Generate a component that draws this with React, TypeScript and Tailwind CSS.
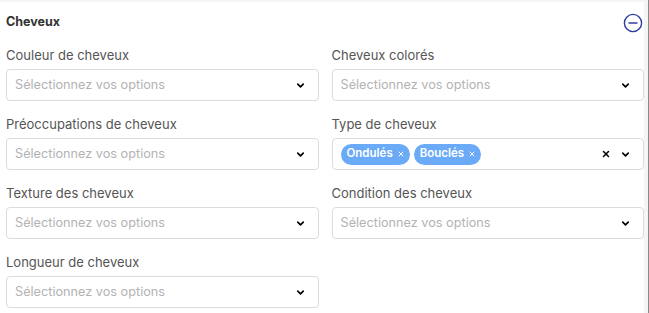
import { ChevronDown, X } from 'lucide-react'

type Field = { label: string; tags?: string[] }

const FIELDS: Field[] = [
  { label: 'Couleur de cheveux' },
  { label: 'Cheveux colorés' },
  { label: 'Préoccupations de cheveux' },
  { label: 'Type de cheveux', tags: ['Ondulés', 'Bouclés'] },
  { label: 'Texture des cheveux' },
  { label: 'Condition des cheveux' },
  { label: 'Longueur de cheveux' },
]

function Select({ field }: { field: Field }) {
  return (
    <div>
      <p className="text-[13px] text-[#555] leading-4 mb-[6px]">{field.label}</p>
      <div className="h-[32px] border border-[#dcdcdc] rounded-[4px] bg-white flex items-center pl-[7px] pr-[12px]">
        {field.tags ? (
          <div className="flex-1 flex gap-[4px] pl-[1px]">
            {field.tags.map(t => (
              <span key={t} className="h-[21px] rounded-full bg-[#6aaaf6] text-white text-[11.5px] font-semibold flex items-center pl-[6px] pr-[5px] gap-[4px]">
                {t}
                <X size={8} strokeWidth={3} />
              </span>
            ))}
          </div>
        ) : (
          <span className="flex-1 text-[12.7px] text-[#b3b3b3] pl-[1px]">Sélectionnez vos options</span>
        )}
        {field.tags && <X size={10} strokeWidth={3.5} className="text-black mr-[9px]" />}
        <ChevronDown size={11} strokeWidth={3.5} className="text-black" />
      </div>
    </div>
  )
}

export default function App() {
  return (
    <div className="w-[649px] h-[313px] bg-white flex" style={{ fontFamily: 'Inter, sans-serif' }}>
      <div className="w-[648px] h-full border-t-2 border-[#f4f5f7] border-r-[4px] border-r-[#f4f5f7] pl-[6px]">
        <div className="flex items-center justify-between h-[41px] pr-[1px]">
          <h2 className="text-[12.5px] font-bold text-[#333]">Cheveux</h2>
          <svg width="20" height="20" viewBox="0 0 20 20" fill="none" stroke="#2f3e9e" strokeWidth="1.4">
            <circle cx="10" cy="10" r="8.6" />
            <line x1="6" y1="10" x2="14" y2="10" strokeLinecap="round" />
          </svg>
        </div>
        <div className="grid grid-cols-2 gap-x-[13px] gap-y-[15px] pt-[4px]">
          {FIELDS.map(f => (
            <Select key={f.label} field={f} />
          ))}
        </div>
      </div>
      <div className="w-[1px] h-full bg-[#8a8a8a]" />
    </div>
  )
}
